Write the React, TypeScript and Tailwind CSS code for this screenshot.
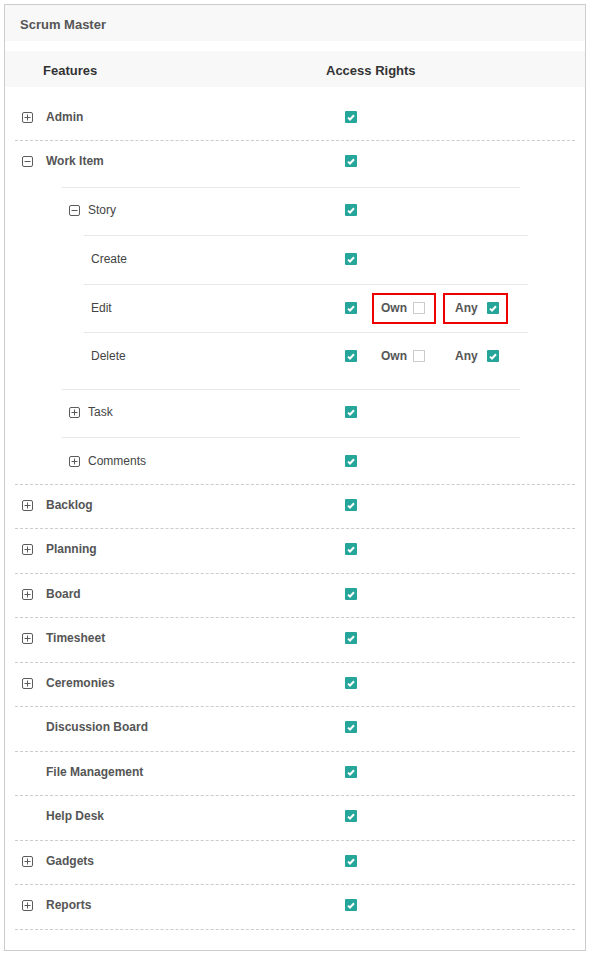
import React from "react";

type TopRow = { label: string; expandable: boolean };

const topRows: TopRow[] = [
  { label: "Backlog", expandable: true },
  { label: "Planning", expandable: true },
  { label: "Board", expandable: true },
  { label: "Timesheet", expandable: true },
  { label: "Ceremonies", expandable: true },
  { label: "Discussion Board", expandable: false },
  { label: "File Management", expandable: false },
  { label: "Help Desk", expandable: false },
  { label: "Gadgets", expandable: true },
  { label: "Reports", expandable: true },
];

// 展開/折りたたみアイコン
const Toggle = ({ open }: { open: boolean }) => (
  <svg width="11" height="11" viewBox="0 0 11 11" className="block shrink-0">
    <rect x="0.5" y="0.5" width="10" height="10" rx="1.5" fill="none" stroke="#5c5c5c" />
    <line x1="2.5" y1="5.5" x2="8.5" y2="5.5" stroke="#5c5c5c" />
    {!open && <line x1="5.5" y1="2.5" x2="5.5" y2="8.5" stroke="#5c5c5c" />}
  </svg>
);

const Check = ({ checked = true }: { checked?: boolean }) =>
  checked ? (
    <span className="flex h-[12px] w-[12px] shrink-0 items-center justify-center rounded-[1px] bg-[#26a69a]">
      <svg width="8" height="7" viewBox="0 0 8 7">
        <path d="M1 3.6 L3 5.5 L7 1.3" fill="none" stroke="white" strokeWidth="2" />
      </svg>
    </span>
  ) : (
    <span className="block h-[12px] w-[12px] shrink-0 border border-[#cccccc] bg-white" />
  );

// Own / Any の権限選択
const OwnAny = ({ highlight }: { highlight: boolean }) => (
  <div className="ml-[15px] flex items-center">
    <div
      className={`flex h-[31px] w-[64px] shrink-0 items-center border-2 pl-[7px] ${
        highlight ? "border-[#ee0000]" : "border-transparent"
      }`}
    >
      <span className="w-[32px] font-bold text-[#555]">Own</span>
      <Check checked={false} />
    </div>
    <div
      className={`ml-[7px] flex h-[31px] w-[65px] shrink-0 items-center border-2 pl-[10px] ${
        highlight ? "border-[#ee0000]" : "border-transparent"
      }`}
    >
      <span className="w-[32px] font-bold text-[#555]">Any</span>
      <Check />
    </div>
  </div>
);

const TopLabel = ({ label, expandable, open = false }: { label: string; expandable: boolean; open?: boolean }) => (
  <div className="flex h-[16px] w-[330px] shrink-0 items-center pl-[7px]">
    <span className="w-[24px] shrink-0">{expandable && <Toggle open={open} />}</span>
    <span className="font-bold text-[#555]">{label}</span>
  </div>
);

export default function App() {
  return (
    <div className="min-h-screen bg-white pt-[4px] font-['Liberation_Sans',Arial,sans-serif] text-[12px] leading-[16px]">
      <div className="mx-[4px] border border-[#cccccc] pb-[20px]">
        {/* タイトル */}
        <div className="flex h-[36px] items-center bg-[#f8f8f8] pl-[15px] pt-[3px] text-[13px] font-bold text-[#555]">
          Scrum Master
        </div>

        {/* テーブルヘッダー */}
        <div className="mt-[10px] flex h-[36px] items-center bg-[#f8f8f8] pt-[3px] text-[13px] font-bold text-[#333]">
          <div className="w-[321px] pl-[38px]">Features</div>
          <div>Access Rights</div>
        </div>

        <div className="pt-[10px]">
          {/* Admin */}
          <div className="mx-[10px] flex h-[44px] items-start border-b border-dashed border-[#cccccc] pt-[12px]">
            <TopLabel label="Admin" expandable />
            <div className="flex h-[16px] items-center">
              <Check />
            </div>
          </div>

          {/* Work Item（展開中） */}
          <div className="mx-[10px] border-b border-dashed border-[#cccccc]">
            <div className="flex h-[46px] items-start pt-[12px]">
              <TopLabel label="Work Item" expandable open />
              <div className="flex h-[16px] items-center">
                <Check />
              </div>
            </div>

            <div className="ml-[47px] w-[458px]">
              {/* Story */}
              <div className="flex h-[48px] items-start border-t border-[#e8e8e8] pt-[14px]">
                <div className="flex h-[16px] w-[283px] shrink-0 items-center pl-[7px] text-[#444]">
                  <span className="w-[19px] shrink-0">
                    <Toggle open />
                  </span>
                  Story
                </div>
                <div className="flex h-[16px] items-center">
                  <Check />
                </div>
              </div>

              <div className="ml-[22px] w-[444px] pb-[8.5px]">
                <div className="flex h-[49px] items-start border-t border-[#e8e8e8] pt-[15px]">
                  <div className="flex h-[16px] w-[261px] shrink-0 items-center pl-[7px] text-[#444]">Create</div>
                  <div className="flex h-[16px] items-center">
                    <Check />
                  </div>
                </div>
                <div className="flex h-[48px] items-start border-t border-[#e8e8e8] pt-[15px]">
                  <div className="flex h-[16px] w-[261px] shrink-0 items-center pl-[7px] text-[#444]">Edit</div>
                  <div className="flex h-[16px] items-center">
                    <Check />
                    <OwnAny highlight />
                  </div>
                </div>
                <div className="flex h-[48.5px] items-start border-t border-[#e8e8e8] pt-[15px]">
                  <div className="flex h-[16px] w-[261px] shrink-0 items-center pl-[7px] text-[#444]">Delete</div>
                  <div className="flex h-[16px] items-center">
                    <Check />
                    <OwnAny highlight={false} />
                  </div>
                </div>
              </div>

              {/* Task */}
              <div className="flex h-[48px] items-start border-t border-[#e8e8e8] pt-[14px]">
                <div className="flex h-[16px] w-[283px] shrink-0 items-center pl-[7px] text-[#444]">
                  <span className="w-[19px] shrink-0">
                    <Toggle open={false} />
                  </span>
                  Task
                </div>
                <div className="flex h-[16px] items-center">
                  <Check />
                </div>
              </div>

              {/* Comments */}
              <div className="flex h-[47px] items-start border-t border-[#e8e8e8] pt-[15px]">
                <div className="flex h-[16px] w-[283px] shrink-0 items-center pl-[7px] text-[#444]">
                  <span className="w-[19px] shrink-0">
                    <Toggle open={false} />
                  </span>
                  Comments
                </div>
                <div className="flex h-[16px] items-center">
                  <Check />
                </div>
              </div>
            </div>
          </div>

          {topRows.map((row, i) => (
            <div
              key={row.label}
              className={`mx-[10px] flex items-start border-b border-dashed border-[#cccccc] pt-[12px] ${
                i % 2 === 0 ? "h-[44px]" : "h-[45px]"
              }`}
            >
              <TopLabel label={row.label} expandable={row.expandable} />
              <div className="flex h-[16px] items-center">
                <Check />
              </div>
            </div>
          ))}
        </div>
      </div>
    </div>
  );
}
